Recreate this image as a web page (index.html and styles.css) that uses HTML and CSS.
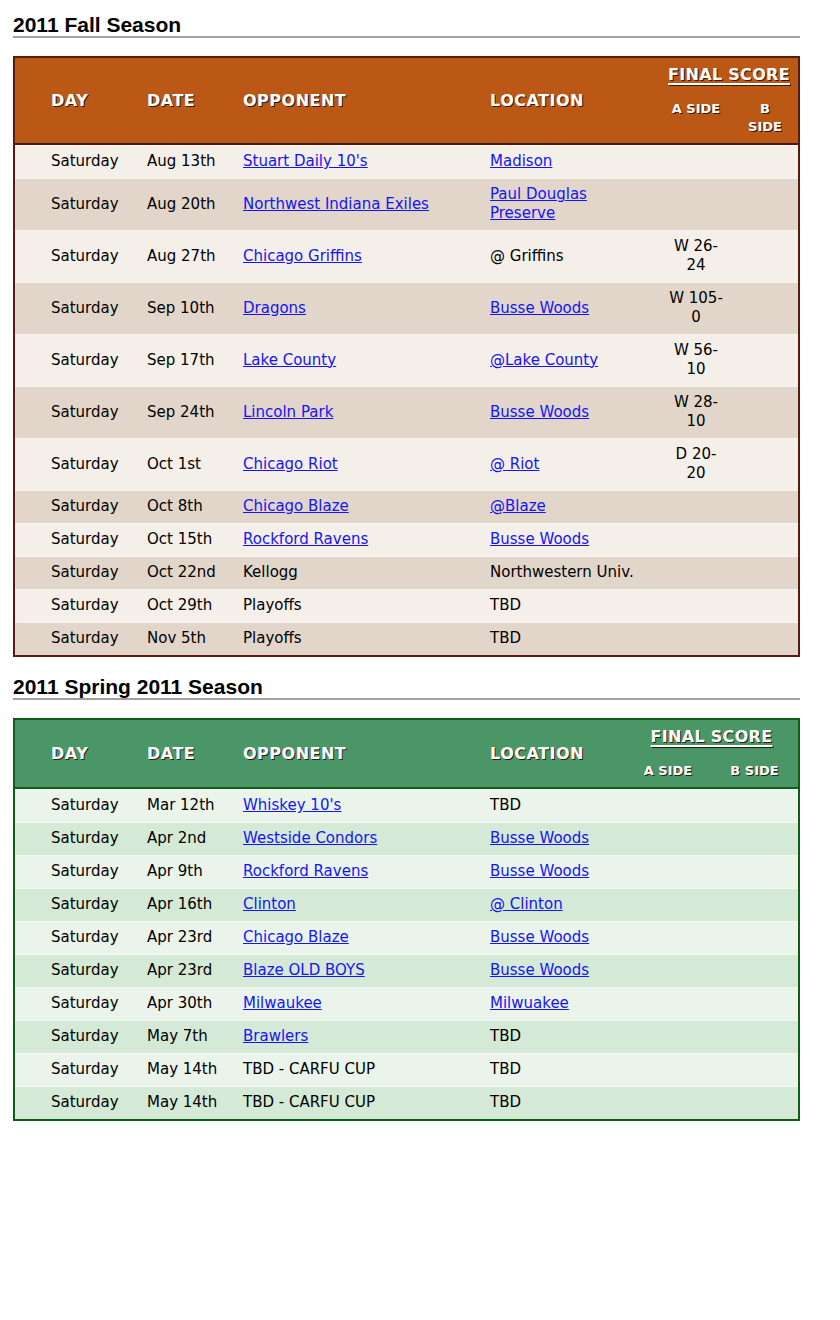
FILE: index.html
```html
<!DOCTYPE html>
<html>
<head>
<meta charset="utf-8">
<link rel="stylesheet" href="styles.css">
</head>
<body>
<div class="page">
  <h2 class="season-title">2011 Fall Season</h2>
  <table class="schedule fall">
    <colgroup>
      <col class="c-day"><col class="c-date"><col class="c-opp"><col class="c-loc-fall"><col class="c-a-fall"><col class="c-b-fall">
    </colgroup>
    <thead>
      <tr>
        <th rowspan="2" class="first">DAY</th>
        <th rowspan="2">DATE</th>
        <th rowspan="2">OPPONENT</th>
        <th rowspan="2">LOCATION</th>
        <th colspan="2" class="final"><u>FINAL SCORE</u></th>
      </tr>
      <tr>
        <th class="side">A SIDE</th>
        <th class="side">B SIDE</th>
      </tr>
    </thead>
    <tbody>
      <tr><td class="first">Saturday</td><td>Aug 13th</td><td><a href="#">Stuart Daily 10's</a></td><td class="loc"><a href="#">Madison</a></td><td class="score"></td><td class="score"></td></tr>
      <tr><td class="first">Saturday</td><td>Aug 20th</td><td><a href="#">Northwest Indiana Exiles</a></td><td class="loc"><a href="#">Paul Douglas Preserve</a></td><td class="score"></td><td class="score"></td></tr>
      <tr><td class="first">Saturday</td><td>Aug 27th</td><td><a href="#">Chicago Griffins</a></td><td class="loc">@ Griffins</td><td class="score">W 26-24</td><td class="score"></td></tr>
      <tr><td class="first">Saturday</td><td>Sep 10th</td><td><a href="#">Dragons</a></td><td class="loc"><a href="#">Busse Woods</a></td><td class="score">W 105-0</td><td class="score"></td></tr>
      <tr><td class="first">Saturday</td><td>Sep 17th</td><td><a href="#">Lake County</a></td><td class="loc"><a href="#">@Lake County</a></td><td class="score">W 56-10</td><td class="score"></td></tr>
      <tr><td class="first">Saturday</td><td>Sep 24th</td><td><a href="#">Lincoln Park</a></td><td class="loc"><a href="#">Busse Woods</a></td><td class="score">W 28-10</td><td class="score"></td></tr>
      <tr><td class="first">Saturday</td><td>Oct 1st</td><td><a href="#">Chicago Riot</a></td><td class="loc"><a href="#">@ Riot</a></td><td class="score">D 20-20</td><td class="score"></td></tr>
      <tr><td class="first">Saturday</td><td>Oct 8th</td><td><a href="#">Chicago Blaze</a></td><td class="loc"><a href="#">@Blaze</a></td><td class="score"></td><td class="score"></td></tr>
      <tr><td class="first">Saturday</td><td>Oct 15th</td><td><a href="#">Rockford Ravens</a></td><td class="loc"><a href="#">Busse Woods</a></td><td class="score"></td><td class="score"></td></tr>
      <tr><td class="first">Saturday</td><td>Oct 22nd</td><td>Kellogg</td><td class="loc">Northwestern Univ.</td><td class="score"></td><td class="score"></td></tr>
      <tr><td class="first">Saturday</td><td>Oct 29th</td><td>Playoffs</td><td class="loc">TBD</td><td class="score"></td><td class="score"></td></tr>
      <tr><td class="first">Saturday</td><td>Nov 5th</td><td>Playoffs</td><td class="loc">TBD</td><td class="score"></td><td class="score"></td></tr>
    </tbody>
  </table>

  <h2 class="season-title">2011 Spring 2011 Season</h2>
  <table class="schedule spring">
    <colgroup>
      <col class="c-day"><col class="c-date"><col class="c-opp"><col class="c-loc-spring"><col class="c-a-spring"><col class="c-b-spring">
    </colgroup>
    <thead>
      <tr>
        <th rowspan="2" class="first">DAY</th>
        <th rowspan="2">DATE</th>
        <th rowspan="2">OPPONENT</th>
        <th rowspan="2">LOCATION</th>
        <th colspan="2" class="final"><u>FINAL SCORE</u></th>
      </tr>
      <tr>
        <th class="side">A SIDE</th>
        <th class="side">B SIDE</th>
      </tr>
    </thead>
    <tbody>
      <tr><td class="first">Saturday</td><td>Mar 12th</td><td><a href="#">Whiskey 10's</a></td><td>TBD</td><td class="score"></td><td class="score"></td></tr>
      <tr><td class="first">Saturday</td><td>Apr 2nd</td><td><a href="#">Westside Condors</a></td><td><a href="#">Busse Woods</a></td><td class="score"></td><td class="score"></td></tr>
      <tr><td class="first">Saturday</td><td>Apr 9th</td><td><a href="#">Rockford Ravens</a></td><td><a href="#">Busse Woods</a></td><td class="score"></td><td class="score"></td></tr>
      <tr><td class="first">Saturday</td><td>Apr 16th</td><td><a href="#">Clinton</a></td><td><a href="#">@ Clinton</a></td><td class="score"></td><td class="score"></td></tr>
      <tr><td class="first">Saturday</td><td>Apr 23rd</td><td><a href="#">Chicago Blaze</a></td><td><a href="#">Busse Woods</a></td><td class="score"></td><td class="score"></td></tr>
      <tr><td class="first">Saturday</td><td>Apr 23rd</td><td><a href="#">Blaze OLD BOYS</a></td><td><a href="#">Busse Woods</a></td><td class="score"></td><td class="score"></td></tr>
      <tr><td class="first">Saturday</td><td>Apr 30th</td><td><a href="#">Milwaukee</a></td><td><a href="#">Milwuakee</a></td><td class="score"></td><td class="score"></td></tr>
      <tr><td class="first">Saturday</td><td>May 7th</td><td><a href="#">Brawlers</a></td><td>TBD</td><td class="score"></td><td class="score"></td></tr>
      <tr><td class="first">Saturday</td><td>May 14th</td><td>TBD - CARFU CUP</td><td>TBD</td><td class="score"></td><td class="score"></td></tr>
      <tr><td class="first">Saturday</td><td>May 14th</td><td>TBD - CARFU CUP</td><td>TBD</td><td class="score"></td><td class="score"></td></tr>
    </tbody>
  </table>
</div>
</body>
</html>
```

FILE: styles.css
```css
html, body {
  margin: 0;
  padding: 0;
  background: #ffffff;
}

.page {
  padding: 13px 0 0 13px;
  width: 787px;
}

.season-title {
  margin: 0 0 18px 0;
  font-family: "Liberation Sans", Arial, sans-serif;
  font-weight: bold;
  font-size: 21px;
  line-height: 23px;
  color: #000;
  border-bottom: 2px solid #a0a0a0;
}

.schedule + .season-title {
  margin-top: 18px;
}

.schedule {
  width: 787px;
  table-layout: fixed;
  border-collapse: separate;
  border-spacing: 0;
  font-family: "DejaVu Sans", Verdana, sans-serif;
  font-size: 15px;
  line-height: 19px;
  color: #000;
}

.c-day { width: 132px; }
.c-date { width: 96px; }
.c-opp { width: 247px; }
.c-loc-fall { width: 170px; }
.c-a-fall { width: 72px; }
.c-b-fall { width: 66px; }
.c-loc-spring { width: 135px; }
.c-a-spring { width: 86px; }
.c-b-spring { width: 87px; }

.schedule th {
  font-family: "DejaVu Sans", Verdana, sans-serif;
  font-weight: bold;
  font-size: 16px;
  line-height: 20px;
  letter-spacing: 0.5px;
  color: #ffffff;
  text-align: left;
  vertical-align: middle;
  padding: 7px 0;
  text-shadow: 1px 1px 0 rgba(40, 15, 0, 0.9);
}

.schedule th.final {
  text-align: center;
  letter-spacing: 0.3px;
  padding: 7px 0;
}

.schedule th.final u {
  text-decoration: underline;
  text-underline-offset: 3px;
  text-decoration-thickness: 1.5px;
}

.schedule th.side {
  font-size: 13px;
  line-height: 18px;
  letter-spacing: 0;
  text-align: center;
  vertical-align: top;
  padding: 8px 10px 7px 10px;
}

.schedule th.first,
.schedule td.first {
  padding-left: 36px;
}

.schedule td {
  padding: 6px 0 7px 0;
  vertical-align: middle;
  text-align: left;
}

.schedule td.loc {
  padding-right: 18px;
}

.schedule td.score {
  text-align: center;
  padding: 6px 7px 7px 7px;
}

.schedule a {
  color: #1414f5;
  text-decoration: underline;
}

/* Fall theme */
.fall {
  border: 2px solid #5a1a0e;
}
.fall thead th {
  background: #bc5816;
}
.fall thead tr:first-child th[rowspan],
.fall thead tr:last-child th {
  border-bottom: 2px solid #4a1a08;
}
.fall tbody tr:nth-child(odd) td {
  background: #f4efe8;
}
.fall tbody tr:nth-child(even) td {
  background: #e2d6ca;
}
.fall tbody tr td {
  border-top: 1px solid #f8f5f0;
}

/* Spring theme */
.spring {
  border: 2px solid #0e5e14;
}
.spring thead th {
  background: #4b9666;
}
.spring thead tr:first-child th[rowspan],
.spring thead tr:last-child th {
  border-bottom: 2px solid #0e5e14;
}
.spring tbody tr:nth-child(odd) td {
  background: #eaf4ea;
}
.spring tbody tr:nth-child(even) td {
  background: #d4e9d6;
}
.spring tbody tr td {
  border-top: 1px solid #f2f9f2;
}
.spring tbody tr:first-child td,
.fall tbody tr:first-child td {
  border-top: 1px solid #ffffff;
}
```
